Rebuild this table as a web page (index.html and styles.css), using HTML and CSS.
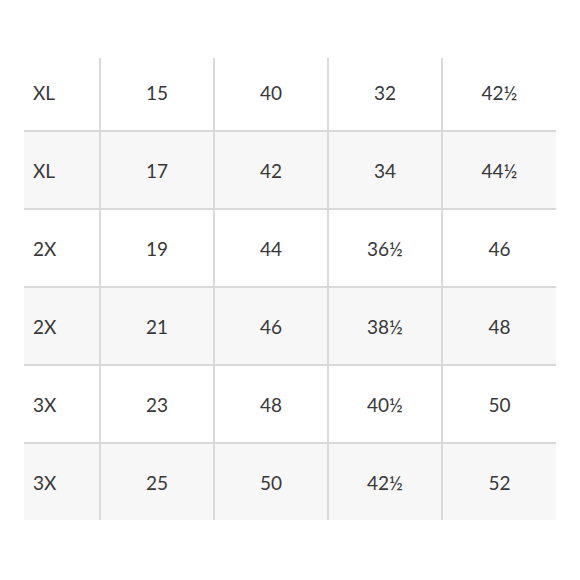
FILE: index.html
```html
<!DOCTYPE html>
<html>
<head>
<meta charset="utf-8">
<link rel="stylesheet" href="styles.css">
</head>
<body>
<table class="size-table">
  <colgroup>
    <col class="c-size"><col class="c-num"><col class="c-num"><col class="c-num"><col class="c-last">
  </colgroup>
  <tbody>
    <tr class="row first"><td class="label">XL</td><td>15</td><td>40</td><td>32</td><td>42½</td></tr>
    <tr class="row alt"><td class="label">XL</td><td>17</td><td>42</td><td>34</td><td>44½</td></tr>
    <tr class="row"><td class="label">2X</td><td>19</td><td>44</td><td>36½</td><td>46</td></tr>
    <tr class="row alt"><td class="label">2X</td><td>21</td><td>46</td><td>38½</td><td>48</td></tr>
    <tr class="row"><td class="label">3X</td><td>23</td><td>48</td><td>40½</td><td>50</td></tr>
    <tr class="row alt"><td class="label">3X</td><td>25</td><td>50</td><td>42½</td><td>52</td></tr>
  </tbody>
</table>
</body>
</html>
```
FILE: styles.css
```css
html, body {
  margin: 0;
  padding: 0;
  background: #ffffff;
}
body {
  padding: 58px 0 0 24px;
  font-family: Lato, "Open Sans", "Liberation Sans", sans-serif;
  font-weight: 400;
  color: #383838;
}
.size-table {
  border-collapse: collapse;
  width: 532px;
  table-layout: fixed;
}
.c-size { width: 76px; }
.c-num { width: 114px; }
.c-last { width: 114px; }
.size-table td {
  height: 76px;
  padding: 0;
  text-align: center;
  vertical-align: middle;
  font-size: 19px;
  border-top: 2px solid #d9d9d9;
  border-left: 2px solid #dadada;
}
.size-table td.label {
  text-align: left;
  padding-left: 9px;
  border-left: none;
}
.row.first td {
  border-top: none;
  height: 68px;
  padding-bottom: 4px;
}
.row.alt td {
  background: #f7f7f7;
}
```
